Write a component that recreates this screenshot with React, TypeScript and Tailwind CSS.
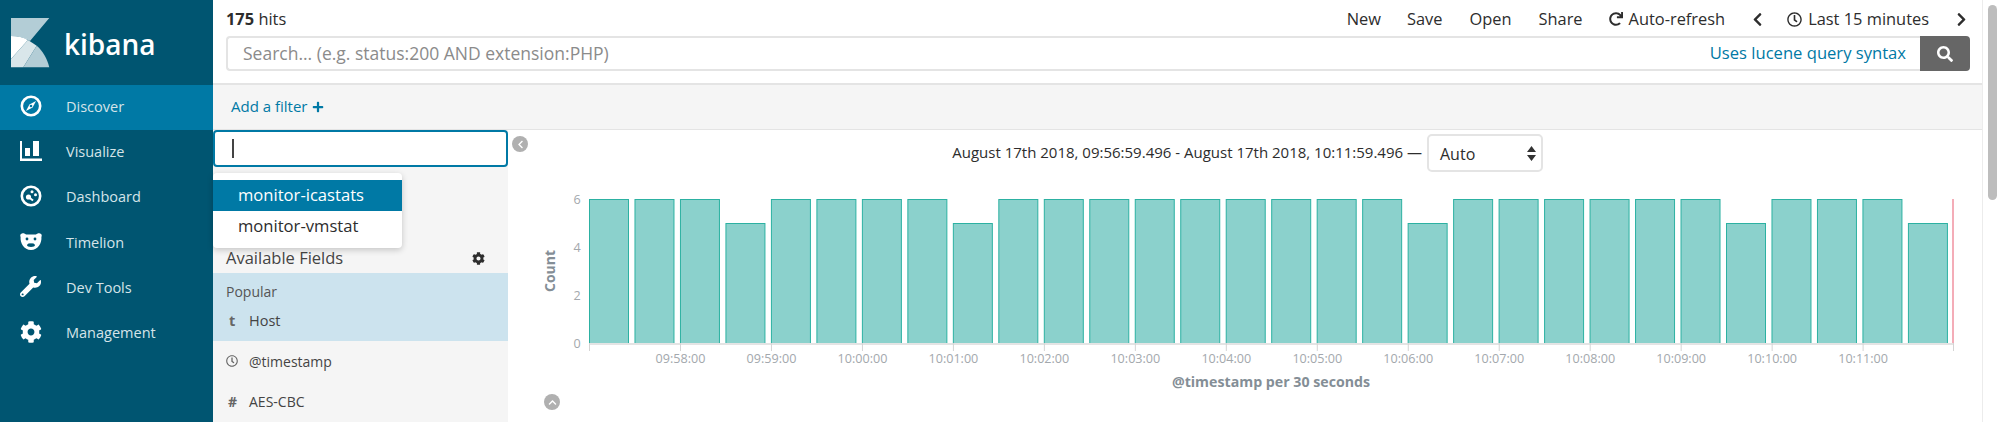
import { FaChevronLeft, FaChevronRight, FaChevronUp, FaCog, FaPlus, FaRedo, FaRegClock, FaSearch, FaWrench } from "react-icons/fa";

const COUNTS = [6, 6, 6, 5, 6, 6, 6, 6, 5, 6, 6, 6, 6, 6, 6, 6, 6, 6, 5, 6, 6, 6, 6, 6, 6, 5, 6, 6, 6, 5];
const TIMES = ["09:58:00", "09:59:00", "10:00:00", "10:01:00", "10:02:00", "10:03:00", "10:04:00", "10:05:00", "10:06:00", "10:07:00", "10:08:00", "10:09:00", "10:10:00", "10:11:00"];

function CompassIcon() {
  return (
    <svg width="22" height="22" viewBox="0 0 22 22">
      <circle cx="11" cy="11" r="9.2" fill="none" stroke="white" strokeWidth="2.6" />
      <path d="M16 6 L12.6 12.6 L6 16 L9.4 9.4 Z" fill="white" />
      <circle cx="11" cy="11" r="1.3" fill="#0079a5" />
    </svg>
  );
}

function BarsIcon() {
  return (
    <svg width="22" height="20" viewBox="0 0 22 20">
      <path d="M0 0 H2 V17.5 H22 V20 H0 Z" fill="white" />
      <rect x="5" y="7" width="5" height="8" fill="white" />
      <rect x="13" y="0" width="6" height="15" fill="white" />
    </svg>
  );
}

function DashIcon() {
  return (
    <svg width="22" height="22" viewBox="0 0 22 22">
      <circle cx="11" cy="11" r="9.2" fill="none" stroke="white" strokeWidth="2.6" />
      <circle cx="8.5" cy="12" r="2.6" fill="white" />
      <circle cx="12" cy="6.8" r="1.5" fill="white" />
      <circle cx="15.5" cy="9.8" r="1.5" fill="white" />
      <path d="M8.5 12 L13 15.5" stroke="white" strokeWidth="2" />
    </svg>
  );
}

function BearIcon() {
  return (
    <svg width="22" height="17" viewBox="0 0 22 17">
      <path d="M2 0.5 C4 0 5 1 6 1.5 H16 C17 1 18 0 20 0.5 C22 1 22 3 21.4 4 C22 10 18 17 11 17 C4 17 0 10 0.6 4 C0 3 0 1 2 0.5 Z" fill="white" />
      <circle cx="7" cy="6" r="1.4" fill="#005571" />
      <circle cx="15" cy="6" r="1.4" fill="#005571" />
      <path d="M7 12 C8 9.3 14 9.3 15 12 C15.5 14.5 6.5 14.5 7 12 Z" fill="#005571" />
      <rect x="9.5" y="8.5" width="3" height="1.8" fill="white" />
    </svg>
  );
}

function KibanaLogo() {
  return (
    <svg width="39" height="50" viewBox="0 0 39 50">
      <path d="M0 0 H38.3 L19 23 C13 19.5 7 18 0 18 Z" fill="#b3cdd6" />
      <path d="M0 18 C7 18 12.5 19.5 17 22 L0 41 Z" fill="white" />
      <path d="M17 22 L25.7 27.7 L12.3 49.3 H0 V41 Z" fill="#d9e6ea" />
      <path d="M25.7 27.7 C32 33 36.3 41 38.3 49.3 H12.3 Z" fill="#b3cdd6" />
    </svg>
  );
}

function FieldRow({ type, name }: { type: React.ReactNode; name: string }) {
  return (
    <div className="flex items-center h-[40px] pl-[13px] text-[14px] text-[#444]">
      <span className="w-[23px] flex items-center text-[#666]">{type}</span>
      <span>{name}</span>
    </div>
  );
}

function Histogram() {
  return (
    <svg className="block w-full h-[207px]" viewBox="508 185 1474 207">
      <text transform="translate(555 271) rotate(-90)" textAnchor="middle" fontSize="14" fontWeight="700" fill="#848e96">Count</text>
      {[6, 4, 2, 0].map((v) => (
        <text key={v} x="577" y={343 - v * 24 + 4.5} textAnchor="middle" fontSize="12.6" fill="#a3a8ad">{v}</text>
      ))}
      {COUNTS.map((c, i) => (
        <rect key={i} x={589.5 + i * 45.48} y={343.5 - c * 24} width="39" height={c * 24} fill="#8bd1cc" stroke="#2cb1a2" />
      ))}
      <rect x="1952" y="199" width="2" height="144" fill="#f4adb8" />
      <rect x="589" y="343" width="1365" height="2" fill="#e4e4e4" />
      <rect x="589" y="343" width="1" height="8" fill="#d4d4d4" />
      <rect x="1953" y="343" width="1" height="8" fill="#d4d4d4" />
      {TIMES.map((t, i) => (
        <g key={t}>
          <rect x={680 + i * 90.97} y="343" width="1" height="8" fill="#d4d4d4" />
          <text x={680.5 + i * 90.97} y="363" textAnchor="middle" fontSize="12.6" fill="#a3a8ad">{t}</text>
        </g>
      ))}
      <text x="1271" y="387" textAnchor="middle" fontSize="14.2" fontWeight="700" fill="#848e96">@timestamp per 30 seconds</text>
    </svg>
  );
}

export default function App() {
  const nav = [
    { label: "Discover", icon: <CompassIcon />, active: true },
    { label: "Visualize", icon: <BarsIcon /> },
    { label: "Dashboard", icon: <DashIcon /> },
    { label: "Timelion", icon: <BearIcon /> },
    { label: "Dev Tools", icon: <FaWrench size={21} color="white" /> },
    { label: "Management", icon: <FaCog size={22} color="white" /> },
  ];

  return (
    <div className="flex w-[1999px] h-[422px] overflow-hidden bg-white font-['Open_Sans',sans-serif] text-[14.5px] text-[#2d2d2d]">
      {/* Side nav */}
      <div className="w-[213px] shrink-0 bg-[#005571] text-[#d5e4e9]">
        <div className="h-[85px] flex items-start pl-[11px] pt-[18px]">
          <KibanaLogo />
          <span className="ml-[14px] mt-[6px] text-[28px] leading-[40px] font-semibold text-white">kibana</span>
        </div>
        {nav.map((n) => (
          <div key={n.label} className={`flex items-center h-[45.3px] pl-[20px] ${n.active ? "bg-[#0079a5]" : ""}`}>
            <span className="w-[46px] flex items-center -mt-[4px]">{n.icon}</span>
            <span className="-mt-[2px]">{n.label}</span>
          </div>
        ))}
      </div>

      {/* Content */}
      <div className="flex-1 flex flex-col min-w-0">
        <div className="h-[85px] shrink-0 pl-[13px] pr-[12px] border-b-2 border-[#e4e4e4]">
          <div className="h-[36px] flex items-center pt-[3px] text-[16.4px]">
            <span><b className="font-bold">175</b> hits</span>
            <div className="ml-auto flex items-center">
              <span className="mr-[26px]">New</span>
              <span className="mr-[27px]">Save</span>
              <span className="mr-[27px]">Open</span>
              <span className="mr-[26px]">Share</span>
              <FaRedo size={14} className="mr-[6px]" />
              <span className="mr-[25px]">Auto-refresh</span>
              <FaChevronLeft size={15} className="mr-[22px]" />
              <FaRegClock size={15} className="mr-[6px]" />
              <span className="mr-[25px]">Last 15 minutes</span>
              <FaChevronRight size={15} className="mr-[1px]" />
            </div>
          </div>
          <div className="flex h-[35px]">
            <div className="flex-1 flex items-center justify-between pl-[15px] pr-[14px] border-2 border-r-0 border-[#e4e4e4] rounded-l-[4px]">
              <span className="text-[17.5px] text-[#8b8b8b]">Search... (e.g. status:200 AND extension:PHP)</span>
              <span className="text-[16.6px] text-[#0079a5]">Uses lucene query syntax</span>
            </div>
            <div className="w-[50px] flex items-center justify-center bg-[#666] rounded-r-[4px]">
              <FaSearch size={16} color="white" />
            </div>
          </div>
        </div>

        <div className="h-[45px] shrink-0 flex items-center pl-[18px] pb-[1px] bg-[#f5f5f5] border-b border-[#e4e4e4] text-[15px] text-[#0079a5]">
          Add a filter
          <FaPlus size={12} className="ml-[4px]" />
        </div>

        <div className="flex-1 flex min-h-0">
          {/* Field list */}
          <div className="relative w-[295px] shrink-0 bg-[#f5f5f5]">
            <div className="h-[37px] flex items-center pl-[17px] bg-white border-2 border-[#0079a5] rounded-[4px]">
              <span className="w-[1.5px] h-[19px] bg-[#444]" />
            </div>
            <div className="absolute left-0 top-[43px] w-[189px] h-[75px] pt-[7px] bg-white rounded-[4px] shadow-[0_2px_6px_rgba(0,0,0,0.2)] z-10 text-[16.6px]">
              <div className="h-[31px] flex items-center pl-[25px] bg-[#0079a5] text-white">monitor-icastats</div>
              <div className="h-[31px] flex items-center pl-[25px]">monitor-vmstat</div>
            </div>
            <div className="mt-[70px] h-[36px] pt-[6px] flex items-center justify-between pl-[13px] pr-[23px] text-[#444]">
              <span className="text-[16.5px]">Available Fields</span>
              <FaCog size={13} color="#2d2d2d" />
            </div>
            <div className="h-[68px] bg-[#cce3ee] text-[#444]">
              <div className="pl-[13px] pt-[8px] text-[14px] leading-[22px] text-[#555]">Popular</div>
              <div className="flex items-center h-[36px] pl-[16px]">
                <span className="w-[20px] font-bold text-[#666]">t</span>
                <span>Host</span>
              </div>
            </div>
            <FieldRow type={<FaRegClock size={12} />} name="@timestamp" />
            <FieldRow type={<span className="pl-[2px] font-bold">#</span>} name="AES-CBC" />
          </div>

          {/* Histogram */}
          <div className="relative flex-1 min-w-0">
            <span className="absolute left-[4px] top-[6px] w-[16px] h-[16px] rounded-full bg-[#b0b0b0] flex items-center justify-center">
              <FaChevronLeft size={9} color="white" />
            </span>
            <div className="h-[55px] flex items-start pr-[439px]">
              <span className="ml-auto mt-[11px] text-[15px] whitespace-nowrap">August 17th 2018, 09:56:59.496 - August 17th 2018, 10:11:59.496 —</span>
              <div className="ml-[5px] mt-[4px] w-[116px] h-[38px] pt-[1px] shrink-0 flex items-center justify-between pl-[11px] pr-[5px] border-2 border-[#e4e4e4] rounded-[5px] text-[16px]">
                <span>Auto</span>
                <svg width="9" height="15" viewBox="0 0 9 15">
                  <path d="M4.5 0 L9 6 H0 Z M0 9 H9 L4.5 15 Z" fill="#333" />
                </svg>
              </div>
            </div>
            <Histogram />
            <span className="ml-[36px] mt-[2px] w-[16px] h-[16px] rounded-full bg-[#b0b0b0] flex items-center justify-center">
              <FaChevronUp size={9} color="white" />
            </span>
          </div>
        </div>
      </div>

      {/* Scrollbar */}
      <div className="w-[17px] shrink-0 pl-[5px] pt-[5px] border-l border-[#ececec]">
        <div className="w-[9px] h-[195px] rounded-full bg-[#bdbdbd]" />
      </div>
    </div>
  );
}
